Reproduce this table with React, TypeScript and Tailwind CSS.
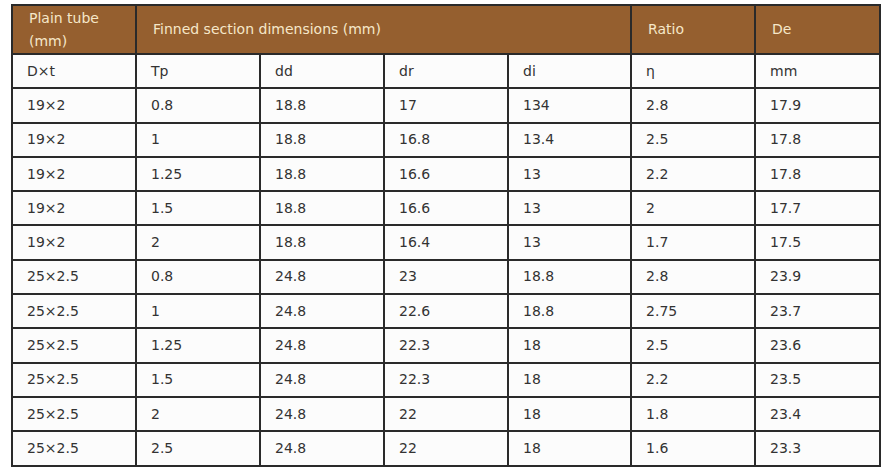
const rows: string[][] = [
  ["19×2", "0.8", "18.8", "17", "134", "2.8", "17.9"],
  ["19×2", "1", "18.8", "16.8", "13.4", "2.5", "17.8"],
  ["19×2", "1.25", "18.8", "16.6", "13", "2.2", "17.8"],
  ["19×2", "1.5", "18.8", "16.6", "13", "2", "17.7"],
  ["19×2", "2", "18.8", "16.4", "13", "1.7", "17.5"],
  ["25×2.5", "0.8", "24.8", "23", "18.8", "2.8", "23.9"],
  ["25×2.5", "1", "24.8", "22.6", "18.8", "2.75", "23.7"],
  ["25×2.5", "1.25", "24.8", "22.3", "18", "2.5", "23.6"],
  ["25×2.5", "1.5", "24.8", "22.3", "18", "2.2", "23.5"],
  ["25×2.5", "2", "24.8", "22", "18", "1.8", "23.4"],
  ["25×2.5", "2.5", "24.8", "22", "18", "1.6", "23.3"],
];

const units = ["D×t", "Tp", "dd", "dr", "di", "η", "mm"];

export default function App() {
  return (
    <div className="w-[891px] h-[467px] bg-white pl-[11px] pt-[4px] overflow-hidden font-['DejaVu_Sans',sans-serif] text-[14px] text-[#333]">
      <table className="w-[868px] border-collapse border-2 border-[#2a2a2a] table-fixed">
        <colgroup>
          <col className="w-[124px]" />
          <col className="w-[124px]" />
          <col className="w-[124px]" />
          <col className="w-[124px]" />
          <col className="w-[123px]" />
          <col className="w-[124px]" />
          <col className="w-[125px]" />
        </colgroup>
        <thead>
          <tr className="bg-[#955f2f] text-[#f6e7c9] h-[49px]">
            <th className="border-2 border-[#2a2a2a] text-left font-normal px-[16px] leading-[23px]">
              Plain tube
              <br />
              (mm)
            </th>
            <th colSpan={4} className="border-2 border-[#2a2a2a] text-left font-normal px-[16px]">
              Finned section dimensions (mm)
            </th>
            <th className="border-2 border-[#2a2a2a] text-left font-normal px-[16px]">Ratio</th>
            <th className="border-2 border-[#2a2a2a] text-left font-normal px-[16px]">De</th>
          </tr>
        </thead>
        <tbody className="bg-[#fcfcfc]">
          <tr className="h-[34.3px]">
            {units.map((u, i) => (
              <td key={i} className="border-2 border-[#2a2a2a] px-[14px]">
                {u}
              </td>
            ))}
          </tr>
          {rows.map((r, ri) => (
            <tr key={ri} className="h-[34.3px]">
              {r.map((c, ci) => (
                <td key={ci} className="border-2 border-[#2a2a2a] px-[14px]">
                  {c}
                </td>
              ))}
            </tr>
          ))}
        </tbody>
      </table>
    </div>
  );
}
